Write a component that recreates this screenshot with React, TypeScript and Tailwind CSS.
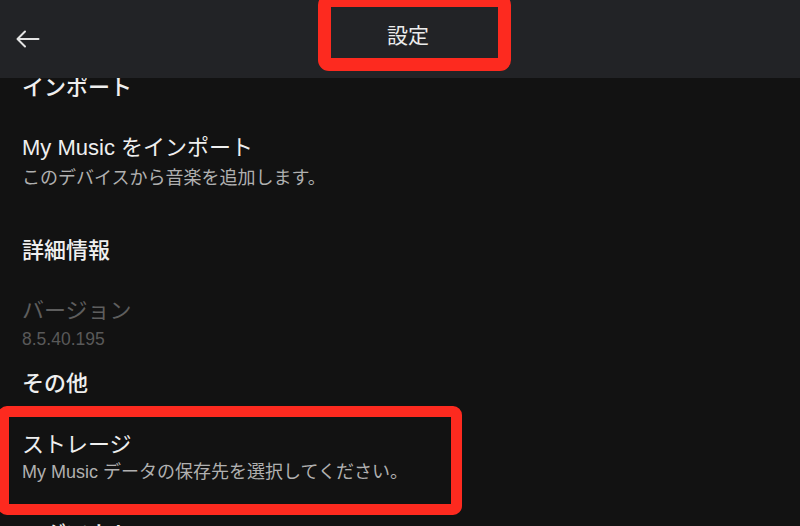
import React from "react";

const font = {
  fontFamily: '"Liberation Sans", "Noto Sans CJK JP", sans-serif',
};

const BackArrow = () => (
  <svg width="24" height="18" viewBox="0 0 24 18" fill="none" stroke="#e4e4e4" strokeWidth="2" strokeLinecap="round" strokeLinejoin="round">
    <path d="M22.5 9H2" />
    <path d="M9 1.5L1.5 9L9 16.5" />
  </svg>
);

export default function App() {
  return (
    <div className="relative w-[800px] h-[526px] overflow-hidden bg-[#121212]" style={font}>
      <div className="relative z-10 h-[78px] bg-[#222326] flex items-center px-[16px]">
        <BackArrow />
        <div className="flex-1 flex justify-center pl-[16px] pr-[24px]">
          <span className="text-[21px] text-[#ececec] leading-none mt-[-8px]">設定</span>
        </div>
      </div>

      <div className="px-[22px] text-[#efefef]">
        <div className="text-[22px] font-medium leading-[20px]">インポート</div>

        <div className="mt-[38px] text-[22px] leading-[24px]">My Music をインポート</div>
        <div className="mt-[7px] text-[18px] leading-[22px] text-[#b0b0b0]">このデバイスから音楽を追加します。</div>

        <div className="mt-[50px] text-[22px] font-medium leading-[24px]">詳細情報</div>

        <div className="mt-[36px] text-[22px] leading-[24px] text-[#5e5e5e]">バージョン</div>
        <div className="mt-[6px] text-[17.5px] leading-[20px] text-[#595959]">8.5.40.195</div>

        <div className="mt-[23px] text-[22px] font-medium leading-[24px]">その他</div>

        <div className="mt-[37px] text-[22px] leading-[24px]">ストレージ</div>
        <div className="mt-[4px] text-[18px] leading-[22px] text-[#b0b0b0]">My Music データの保存先を選択してください。</div>

        <div className="mt-[40px] text-[22px] font-medium leading-[24px]">ログアウト</div>
      </div>

      {/* annotation boxes */}
      <div className="absolute z-20 left-[318px] top-[-6px] w-[193px] h-[77px] border-[13px] border-[#fd2a1f] rounded-[11px]" />
      <div className="absolute z-20 left-[-2px] top-[406px] w-[464px] h-[109px] border-[11px] border-[#fd2a1f] rounded-[9px]" />
    </div>
  );
}
